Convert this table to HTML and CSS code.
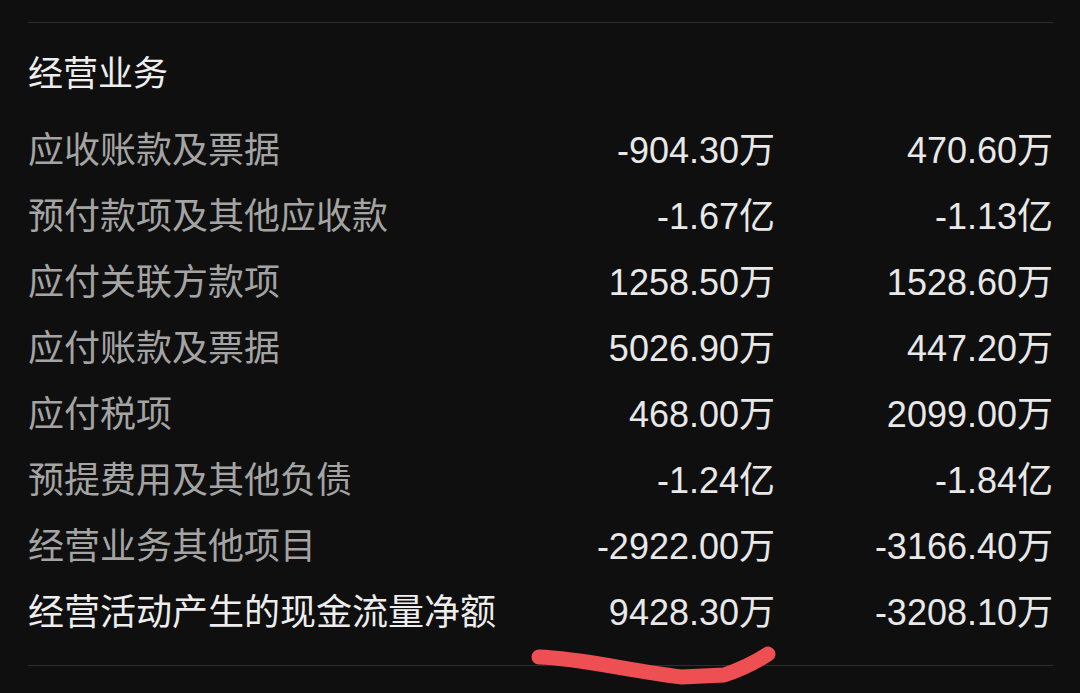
FILE: index.html
```html
<!DOCTYPE html>
<html lang="zh-CN">
<head>
  <meta charset="UTF-8">
  <meta name="viewport" content="width=device-width, initial-scale=1.0">
  <title>经营业务</title>
  <link rel="stylesheet" href="styles.css">
</head>
<body>

<section class="panel">
  <h2 class="panel-title">经营业务</h2>
  <div class="rows">
    <div class="row"><span class="label">应收账款及票据</span><span class="num">-904.30万</span><span class="num">470.60万</span></div>
    <div class="row"><span class="label">预付款项及其他应收款</span><span class="num">-1.67亿</span><span class="num">-1.13亿</span></div>
    <div class="row"><span class="label">应付关联方款项</span><span class="num">1258.50万</span><span class="num">1528.60万</span></div>
    <div class="row"><span class="label">应付账款及票据</span><span class="num">5026.90万</span><span class="num">447.20万</span></div>
    <div class="row"><span class="label">应付税项</span><span class="num">468.00万</span><span class="num">2099.00万</span></div>
    <div class="row"><span class="label">预提费用及其他负债</span><span class="num">-1.24亿</span><span class="num">-1.84亿</span></div>
    <div class="row"><span class="label">经营业务其他项目</span><span class="num">-2922.00万</span><span class="num">-3166.40万</span></div>
    <div class="row total"><span class="label">经营活动产生的现金流量净额</span><span class="num">9428.30万</span><span class="num">-3208.10万</span></div>
  </div>
</section>

<!-- hand-drawn red mark under the total -->
<svg class="scribble" width="1080" height="693" viewBox="0 0 1080 693">
  <path d="M539 657 C 580 658, 630 671, 682 677 L 724 675 Q 748 667 768 654" fill="none" stroke="#ee4f52" stroke-width="15" stroke-linecap="round" stroke-linejoin="round"/>
</svg>

</body>
</html>
```
FILE: styles.css
```css
/* General */
body {
  margin: 0;
  padding: 0;
  background-color: #0f0f0f;
  font-family: "Noto Sans CJK SC", sans-serif;
  position: relative;
  height: 693px;
  overflow: hidden;
}

/* Panel */
.panel {
  margin: 22px 0 0 28px;
  width: 1025px;
  border-top: 1px solid #2e2e2e;
  border-bottom: 1px solid #2e2e2e;
  padding-bottom: 22px;
}
.panel-title {
  margin: 17px 0 9px;
  height: 66px;
  line-height: 62px;
  font-size: 35px;
  font-weight: normal;
  color: #ededed;
}

.row {
  display: grid;
  grid-template-columns: 1fr 244px 278px;
  align-items: center;
  box-sizing: border-box;
  height: 66px;
  padding-bottom: 3px;
  font-size: 36px;
}
.label {
  color: #a4a4a4;
  white-space: nowrap;
}
.num {
  text-align: right;
  color: #e8e8e8;
  font-family: "Liberation Sans", "Noto Sans CJK SC", sans-serif;
  font-size: 36px;
}
.total .label {
  color: #ededed;
}

.scribble {
  position: absolute;
  top: 0;
  left: 0;
  pointer-events: none;
}
```
